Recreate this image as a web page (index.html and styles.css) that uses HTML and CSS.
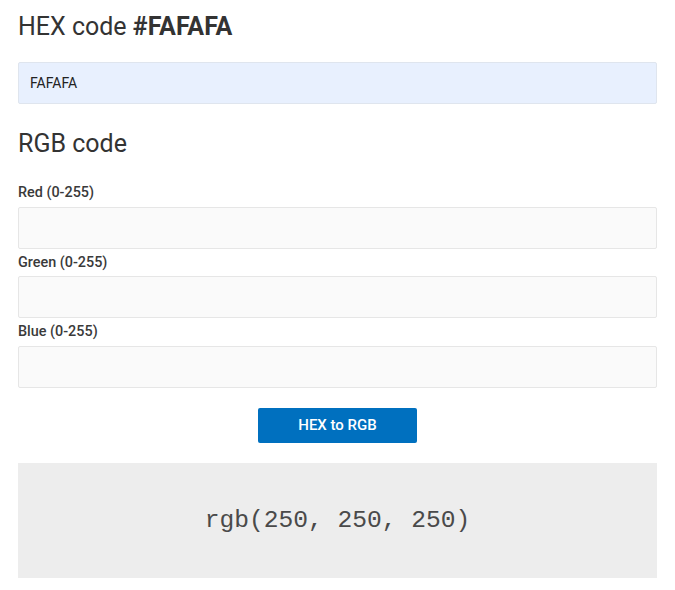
FILE: index.html
```html
<!DOCTYPE html>
<html>
<head>
<meta charset="utf-8">
<link rel="stylesheet" href="styles.css">
</head>
<body>
<div class="wrap">
  <h2 class="title">HEX code <b>#FAFAFA</b></h2>
  <input class="field hex" type="text" value="FAFAFA">
  <h2 class="title rgb-title">RGB code</h2>
  <label class="lbl">Red (0-255)</label>
  <input class="field" type="text">
  <label class="lbl">Green (0-255)</label>
  <input class="field" type="text">
  <label class="lbl">Blue (0-255)</label>
  <input class="field" type="text">
  <div class="actions"><button class="btn">HEX to RGB</button></div>
  <div class="result">rgb(250, 250, 250)</div>
</div>
</body>
</html>
```
FILE: styles.css
```css
html, body { margin: 0; padding: 0; background: #fff; }
body { font-family: Roboto, "Liberation Sans", sans-serif; color: #333; }
.wrap { margin: 0 18px; width: 639px; display: flex; flex-direction: column; }
.title { font-size: 25px; font-weight: 400; margin: 0; line-height: 28px; padding-top: 13px; height: 62px; box-sizing: border-box; }
.title b { font-weight: 700; }
.field { box-sizing: border-box; width: 100%; height: 42px; flex: none; border: 1px solid #e6e6e6; border-radius: 2px; background: #fafafa; font-family: Roboto, "Liberation Sans", sans-serif; font-size: 14px; color: #222; padding: 0 11px; margin: 0; outline: none; }
.hex { background: #e8f0fe; border-color: #dfe5ee; }
.rgb-title { padding-top: 26px; height: 75px; }
.lbl { font-size: 14.4px; font-weight: 500; line-height: 17px; padding: 5px 0; height: 27.5px; box-sizing: border-box; color: #3a3a3a; display: block; }
.actions { display: flex; justify-content: center; padding: 20px 0; }
.btn { width: 159px; height: 35px; background: #0070bf; color: #fff; border: 0; border-radius: 2px; font-family: Roboto, "Liberation Sans", sans-serif; font-size: 15px; font-weight: 500; }
.result { height: 115px; background: #ededed; display: flex; align-items: center; justify-content: center; font-family: "Liberation Mono", "Courier New", monospace; font-size: 24.6px; color: #4a4a4a; padding-top: 1px; box-sizing: border-box; }
```
